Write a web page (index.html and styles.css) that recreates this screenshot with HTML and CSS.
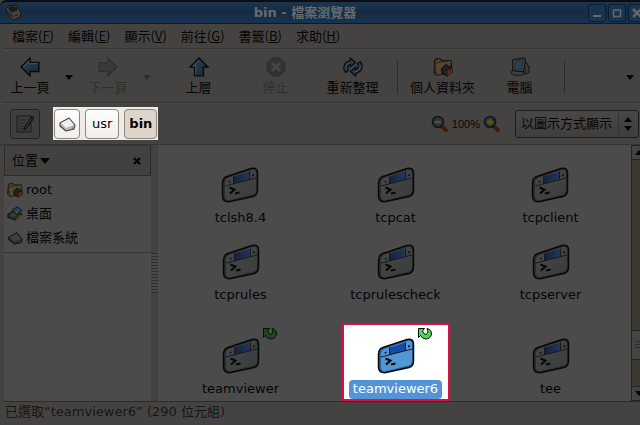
FILE: index.html
```html
<!DOCTYPE html>
<html lang="zh-Hant">
<head>
<meta charset="utf-8">
<title>bin - 檔案瀏覽器</title>
<link rel="stylesheet" href="styles.css">
</head>
<body>
<svg class="defs" aria-hidden="true">
  <defs>
    <linearGradient id="face" x1="0" y1="0" x2="1" y2="1"><stop offset="0" stop-color="#474848"/><stop offset="1" stop-color="#3a3b3b"/></linearGradient>
    <linearGradient id="bar" x1="0" y1="0" x2="1" y2="0"><stop offset="0" stop-color="#14213f"/><stop offset="1" stop-color="#243759"/></linearGradient>
    <linearGradient id="blue" x1="0" y1="0" x2="1" y2="1"><stop offset="0" stop-color="#2f4254"/><stop offset="1" stop-color="#182838"/></linearGradient>
    <symbol id="term" viewBox="0 0 38 38">
      <path d="M6 10.500 30 2.500Q36.500 1 36.500 7V24Q36.500 29 32 30.500L9 35.500Q1.500 36.500 1.500 30V17Q1.500 12 6 10.500Z" fill="var(--edge, #2b2c2c)" stroke="#080808" stroke-width="1.500"/>
      <path d="M8 11.500 30.500 4Q35 3 35 7.500V24Q35 28 31.500 28.500L9.500 34Q4 35 4 30V17Q4 13 8 11.500Z" fill="var(--face, url(#face))"/>
      <path d="M12.500 10.500 28.500 5.500V13.500L12.500 18Z" fill="var(--bar, url(#bar))"/>
      <path d="M4 20 35 12M12.500 10.500V18M28.500 5.500V13.500" fill="none" stroke="#151a20" stroke-width="1"/>
      <path d="M7 15.500 10 14.500 9 17ZM31 8.500 33 8V10L31 10.500Z" fill="#15191e"/>
      <path d="M8.500 21.500 13.500 23.500 9 27.500M14 27.500 18.500 26.500" fill="none" stroke="#080808" stroke-width="2"/>
    </symbol>
    <symbol id="link" viewBox="0 0 16 16">
      <path d="M1.500 2.500H7.500L5.500 5Q6.500 8.500 9 8.500 12 7 10 2.500 14.500 3.500 14.500 8 13.500 13 8.500 13 5 12.500 3.500 9.500L1.500 11.500Z" fill="var(--leaf, #1d4a1a)" stroke="#080c08" stroke-width="1" stroke-linejoin="round"/>
    </symbol>
    <symbol id="arrow" viewBox="0 0 18 18">
      <path d="M1 9 9 1V5H17V13H9V17Z" fill="url(#blue)" stroke="#070a0e" stroke-width="1.300"/>
      <path d="M3 9 8 4V6H16" fill="none" stroke="#3c4d5a"/>
    </symbol>
    <symbol id="home" viewBox="0 0 22 22">
      <path d="M2 3Q5 1 8 2L10 4H20L21 17 4 20 1 17Z" fill="#463c28" stroke="#15120c" stroke-width="1.200"/>
      <path d="M2 9 6 6 20 4 19 17 4 20Z" fill="#51462f" stroke="#2b2418"/>
      <path d="M9 13 14 8 20 12 21 17 16 21 10 18Z" fill="#20211f" stroke="#0a0b0b"/>
      <path d="M16 15 21 13V18L16 21Z" fill="#5b2b12"/>
    </symbol>
    <symbol id="drive" viewBox="0 0 18 18">
      <path d="M2 8 11 3 17 10 16 14 8 16 2 11Z" fill="var(--side, #292a29)" stroke="var(--ink, #101010)" stroke-width="1.100" stroke-linejoin="round"/>
      <path d="M3 8 11 4 16 10 8 13Z" fill="var(--top, #40413f)"/>
      <path d="M14 13H15" stroke="#278038"/>
    </symbol>
    <symbol id="lens" viewBox="0 0 18 18">
      <path d="M10 11 15 15" stroke="#47170a" stroke-width="4" stroke-linecap="round"/>
      <circle cx="7" cy="7" r="5.500" fill="#26343c" stroke="#111619" stroke-width="1.500"/>
      <path d="M4 7H10" stroke="#655114" stroke-width="2.500"/>
    </symbol>
  </defs>
</svg>
<div class="window">
  <header class="titlebar">
    <svg class="app-icon" viewBox="0 0 18 18"><path d="M1 5 4 2 12 1 14 5 17 9 16 14 9 17 4 13Z" fill="#45433d" stroke="#111"/><path d="M3 4 8 2 13 4 13 7 7 9Z" fill="#181b19"/><path d="M3 7 7 10 9 15 5 12Z" fill="#292a27"/><path d="M10 13 14 11" stroke="#151515"/></svg>
    <h1>bin - 檔案瀏覽器</h1>
    <div class="window-buttons">
      <button type="button" aria-label="最小化"><svg viewBox="0 0 12 12"><path d="M2 9H10" stroke="#64686c" stroke-width="2"/></svg></button>
      <button type="button" aria-label="最大化"><svg viewBox="0 0 12 12"><path d="M2.500 3V9.500H9.500V2.500M2 3H10" fill="none" stroke="#64686c" stroke-width="1.500"/></svg></button>
      <button type="button" aria-label="關閉"><svg viewBox="0 0 12 12"><path d="M2 2 10 10M10 2 2 10" stroke="#64686c" stroke-width="2.500"/></svg></button>
    </div>
  </header>
  <nav class="menubar">
    <button type="button">檔案(<u>F</u>)</button>
    <button type="button">編輯(<u>E</u>)</button>
    <button type="button">顯示(<u>V</u>)</button>
    <button type="button">前往(<u>G</u>)</button>
    <button type="button">書籤(<u>B</u>)</button>
    <button type="button">求助(<u>H</u>)</button>
  </nav>
  <div class="toolbar">
    <button type="button" class="tool narrow"><svg viewBox="0 0 18 18"><use href="#arrow"/></svg>上一頁</button>
    <button type="button" class="caret" aria-label="上一頁清單"></button>
    <button type="button" class="tool narrow" disabled><svg viewBox="0 0 18 18"><path d="M17 9 9 1V5H1V13H9V17Z" fill="#393938" stroke="#2e2e2d"/></svg>下一頁</button>
    <button type="button" class="caret" disabled aria-label="下一頁清單"></button>
    <button type="button" class="tool"><svg viewBox="0 0 18 18"><path d="M9 1 17 9H13V17H5V9H1Z" fill="url(#blue)" stroke="#070a0e" stroke-width="1.300"/><path d="M9 3 4 8H6V16" fill="none" stroke="#3c4d5a"/></svg>上層</button>
    <button type="button" class="tool" disabled><svg viewBox="0 0 20 20"><path d="M6 1H14L19 6V14L14 19H6L1 14V6Z" fill="#333231" stroke="#302f2e"/><path d="M6 6 14 14M14 6 6 14" stroke="#484745" stroke-width="3"/></svg>停止</button>
    <button type="button" class="tool"><svg class="wide" viewBox="0 0 22 22"><g id="turn"><path d="M1 14Q0 6 8 4V1L14 6 8 11V8Q4 9 6 15L3 17Z" fill="url(#blue)" stroke="#070a0e" stroke-width="1.200"/><path d="M3 12Q3 7 9 6" fill="none" stroke="#43586a"/></g><use href="#turn" transform="rotate(180 11 11)"/></svg>重新整理</button>
    <span class="divider"></span>
    <button type="button" class="tool"><svg class="wide" viewBox="0 0 22 22"><use href="#home"/></svg>個人資料夾</button>
    <button type="button" class="tool"><svg class="wide" viewBox="0 0 22 22"><path d="M14 8 18 6 21 11V17L16 19Z" fill="#373836" stroke="#101111"/><path d="M1 16 4 13 16 17 13 20 5 20 1 18Z" fill="#40413f" stroke="#141515"/><path d="M3 3 15 1 17 3 15 16 3 15Z" fill="#434543" stroke="#0d0f10" stroke-width="1.200"/><path d="M6 5 14 3 13 13 5 13Z" fill="#2d4250" stroke="#182a37"/></svg>電腦</button>
    <span class="divider"></span>
    <button type="button" class="caret last" aria-label="更多"></button>
  </div>
  <div class="location">
    <button type="button" class="edit" aria-label="編輯位置"><svg viewBox="0 0 20 20"><path d="M2 2H16V18H2Z" fill="#3b3c3b" stroke="#191a1a"/><path d="M4 6H11M4 9H10M4 12H9M4 15H12" stroke="#252626"/><path d="M17 2 19 4 12 14 9 16 10 12Z" fill="#292b2a" stroke="#101111"/></svg></button>
    <nav class="crumbs">
      <button type="button" class="disk" aria-label="檔案系統"><svg viewBox="0 0 18 18"><use href="#drive"/></svg></button>
      <button type="button">usr</button>
      <button type="button" class="current">bin</button>
    </nav>
    <div class="zoom">
      <button type="button" aria-label="縮小"><svg viewBox="0 0 18 18"><use href="#lens"/></svg></button>
      <span>100%</span>
      <button type="button" aria-label="放大"><svg viewBox="0 0 18 18"><use href="#lens"/><path d="M7 4V10" stroke="#655114" stroke-width="2.500"/></svg></button>
    </div>
    <div class="view">
      <select aria-label="檢視方式"><option>以圖示方式顯示</option></select>
      <svg viewBox="0 0 20 26"><path d="M0.500 2V24" stroke="#343331"/><path d="M6 11H14L10 6ZM6 15H14L10 20Z" fill="#050505"/></svg>
    </div>
  </div>
  <main class="panes">
    <aside class="sidebar">
      <div class="side-head">
        <button type="button" class="side-pick">位置<i class="tri"></i></button>
        <button type="button" class="side-close" aria-label="關閉側邊欄"><svg viewBox="0 0 8 8"><path d="M1 1 7 7M7 1 1 7" stroke="#050505" stroke-width="2.200"/></svg></button>
      </div>
      <ul class="places">
        <li><a href="#root"><svg viewBox="0 0 22 22"><use href="#home"/></svg>root</a></li>
        <li><a href="#desktop"><svg viewBox="0 0 18 18"><path d="M1 9 8 5 17 9 10 16 1 13Z" fill="#262b27" stroke="#0c0e0d"/><path d="M6 4 12 1 17 5 11 10Z" fill="#21415a" stroke="#0c151c"/><path d="M8 7 12 5 13 8Z" fill="#44602d"/><path d="M3 10 8 8 11 11 6 13Z" fill="#3b3d3a"/><path d="M10 15 16 10" stroke="#593517" stroke-width="2"/></svg>桌面</a></li>
        <li><a href="#filesystem"><svg viewBox="0 0 18 18"><use href="#drive"/></svg>檔案系統</a></li>
      </ul>
    </aside>
    <div class="splitter"><span></span></div>
    <section class="files">
      <div class="file"><svg class="file-icon" viewBox="0 0 38 38"><use href="#term"/></svg><span>tclsh8.4</span></div>
      <div class="file"><svg class="file-icon" viewBox="0 0 38 38"><use href="#term"/></svg><span>tcpcat</span></div>
      <div class="file"><svg class="file-icon" viewBox="0 0 38 38"><use href="#term"/></svg><span>tcpclient</span></div>
      <div class="file"><svg class="file-icon" viewBox="0 0 38 38"><use href="#term"/></svg><span>tcprules</span></div>
      <div class="file"><svg class="file-icon" viewBox="0 0 38 38"><use href="#term"/></svg><span>tcprulescheck</span></div>
      <div class="file"><svg class="file-icon" viewBox="0 0 38 38"><use href="#term"/></svg><span>tcpserver</span></div>
      <div class="file linked"><svg class="file-icon" viewBox="0 0 38 38"><use href="#term"/></svg><svg class="emblem" viewBox="0 0 16 16"><use href="#link"/></svg><span>teamviewer</span></div>
      <div class="file linked selected"><svg class="file-icon" viewBox="0 0 38 38"><use href="#term"/></svg><svg class="emblem" viewBox="0 0 16 16"><use href="#link"/></svg><span>teamviewer6</span></div>
      <div class="file linked"><svg class="file-icon" viewBox="0 0 38 38"><use href="#term"/></svg><span>tee</span></div>
    </section>
    <div class="scrollbar">
      <button type="button" aria-label="向上捲動"><i class="tri up"></i></button>
      <div class="track"><span class="thumb"></span></div>
      <button type="button" aria-label="向下捲動"><i class="tri"></i></button>
    </div>
  </main>
  <footer class="status">已選取“teamviewer6” (290 位元組)</footer>
</div>
</body>
</html>
```

FILE: styles.css
```css
* { box-sizing: border-box; }
body {
  margin: 0;
  background: #454341;
  color: #050505;
  font: 13px/18px "DejaVu Sans", "Noto Sans CJK TC", sans-serif;
}
button, select { font: inherit; color: inherit; margin: 0; padding: 0; border: 0; background: none; }
svg { display: block; flex: none; }
a { color: inherit; text-decoration: none; }
.defs { position: absolute; width: 0; height: 0; }
.window { display: flex; flex-direction: column; min-height: 100vh; overflow: hidden; }

.titlebar {
  display: flex;
  align-items: center;
  height: 24px;
  padding-left: 5px;
  border-top: 2px solid #0b0d12;
  border-bottom: 1px solid #0c1927;
  border-radius: 6px 0 0 0;
  background: linear-gradient(#1c344d, #142b43 50%, #193450);
}
.app-icon { width: 17px; height: 17px; }
.titlebar h1 { flex: 1; margin: 0; text-align: center; font-size: 13px; line-height: 20px; color: #666b70; }
.window-buttons { display: flex; gap: 2px; margin-right: -6px; }
.window-buttons button { display: grid; place-items: center; width: 18px; height: 18px; border: 1px solid #0c1c2d; border-radius: 3px; background: #1b344e; }
.window-buttons svg { width: 12px; height: 12px; }

.menubar {
  display: flex;
  gap: 14px;
  height: 25px;
  margin-left: 4px;
  padding-left: 8px;
  border-bottom: 1px solid #383634;
  font-family: "Noto Sans CJK TC", sans-serif;
}
.menubar u { text-underline-offset: 1px; }

.toolbar { display: flex; align-items: center; height: 54px; margin-left: 4px; padding-top: 2px; border-top: 1px solid #4b4947; border-bottom: 1px solid #383634; overflow: hidden; }
.tool { display: flex; flex: none; flex-direction: column; align-items: center; gap: 2px; width: 77px; white-space: nowrap; }
.tool svg { width: 20px; height: 20px; }
.tool .wide { width: 24px; }
.narrow { width: 52px; }
.tool:disabled { color: #302f2e; }
.caret { flex: none; display: grid; place-items: center; width: 26px; height: 40px; }
.caret::after, .tri { content: ""; width: 0; height: 0; border: 4px solid transparent; border-top: 5px solid #050505; border-bottom: 0; }
.caret:disabled::after { border-top-color: #302f2e; }
.divider { flex: none; width: 1px; height: 34px; margin: 0 6px; background: #2f2d2c; }
.caret.last { margin-left: auto; margin-right: -3px; }

.location { display: flex; align-items: center; height: 42px; padding: 0 1px 1px 10px; border-top: 1px solid #4b4947; border-bottom: 1px solid #363432; }
.edit { display: grid; place-items: center; width: 30px; height: 30px; border: 1px solid #242322; border-radius: 3px; background: #403e3c; }
.edit svg { width: 20px; height: 20px; }
.crumbs { display: flex; gap: 5px; margin-left: 13px; padding: 2px 1px 1px; background: #efebe6; color: #000; }
.crumbs button { height: 30px; padding: 0 6px; border: 1px solid #8d877c; border-radius: 4px; background: linear-gradient(#fefefd, #f1eeea); }
.crumbs .disk { padding: 0 3px; --side: #b8b9b6; --top: #eeefed; --ink: #454542; }
.crumbs svg { width: 18px; height: 18px; }
.crumbs .current { padding: 0 4px; background: #ddd5ca; font-weight: bold; }
.zoom { display: flex; align-items: center; gap: 3px; margin-left: auto; margin-right: 14px; font-family: "Liberation Sans", sans-serif; font-size: 11px; }
.zoom svg { width: 18px; height: 18px; }
.view { display: grid; align-items: center; width: 124px; height: 28px; border: 1px solid #1d1c1b; border-radius: 3px; background: linear-gradient(#494846, #403e3c); }
.view select, .view svg { grid-area: 1 / 1; }
.view select { appearance: none; width: 100%; height: 26px; padding-left: 5px; }
.view svg { width: 20px; height: 26px; justify-self: end; pointer-events: none; }

.panes { display: flex; flex: 1; margin-left: 4px; background: #4b4b4b; border-bottom: 1px solid #2d2b2a; }
.sidebar { width: 147px; }
.side-head { display: flex; align-items: center; justify-content: space-between; height: 31px; padding: 0 9px 0 7px; border: 1px solid #2e2c2b; border-top-color: #383634; background: #434140; }
.side-pick { display: flex; align-items: center; gap: 2px; }
.side-pick .tri { border-width: 6px 5px 0; }
.side-close svg { width: 8px; height: 8px; }
.places { margin: 0; padding: 2px 0; list-style: none; border-bottom: 1px solid #353433; }
.places a { display: flex; align-items: center; gap: 3px; height: 24px; padding-left: 3px; }
.places svg { width: 16px; height: 16px; }
.splitter { display: flex; align-items: center; width: 7px; background: #434040; }
.splitter span { width: 100%; height: 40px; background: repeating-linear-gradient(#2f2d2b 0 1px, #4b4947 1px 3px); }

.files { flex: 1; display: grid; grid-template-columns: repeat(3, 1fr); grid-template-rows: 77px 80px 78px; padding: 21px 3px 0 5px; }
.file { position: relative; justify-self: center; display: flex; flex-direction: column; align-items: center; gap: 5px; }
.file-icon { width: 38px; height: 38px; }
.file span { padding: 0 4px 1px; border-radius: 4px; }
.linked { width: 108px; height: 78px; padding-top: 12px; border: 2px solid transparent; }
.emblem { position: absolute; top: 1px; right: 15px; width: 16px; height: 16px; }
.selected { border-color: #e30b43; background: #fff; --face: #5296d3; --edge: #235f9c; --bar: #164aa5; --leaf: #4fd84c; }
.selected span { background: #5294d6; color: #fff; }

.scrollbar { display: flex; flex-direction: column; width: 9px; border-left: 1px solid #252321; overflow: hidden; }
.scrollbar button { display: grid; place-items: center; width: 14px; height: 15px; border: solid #252321; border-width: 1px 0; background: #454341; }
.tri.up { border-width: 0 4px 5px; border-style: solid; border-color: transparent transparent #050505; }
.track { display: flex; flex: 1; flex-direction: column; justify-content: flex-end; padding-bottom: 26px; background: #3c3834; }
.thumb { height: 30px; border: solid #252321; border-width: 1px 0; background: linear-gradient(#302e2c, #302e2c) 3px 10px / 8px 1px no-repeat, linear-gradient(#302e2c, #302e2c) 3px 13px / 8px 1px no-repeat, linear-gradient(#302e2c, #302e2c) 3px 16px / 8px 1px no-repeat, #464442; }

.status { height: 23px; padding: 1px 5px; color: #171615; }
```
